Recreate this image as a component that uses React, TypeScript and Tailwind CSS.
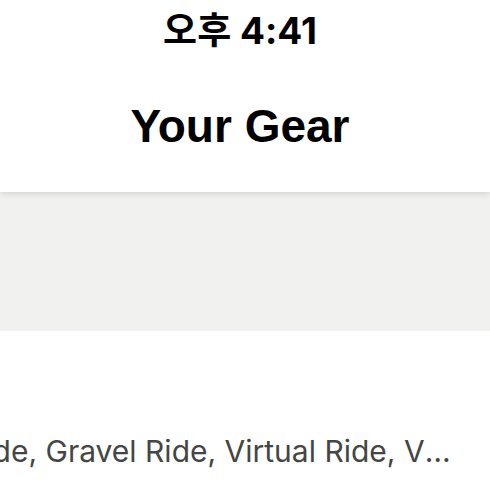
export default function App() {
  return (
    <div className="w-[490px] h-[490px] overflow-hidden bg-white font-['Inter',sans-serif]">
      <header className="relative z-10 bg-white shadow-[0_2px_6px_rgba(0,0,0,0.12)] pr-[10px]">
        <div className="h-[62px] flex items-center justify-center">
          <span className="text-[37px] font-bold text-black font-['Inter','Noto_Sans_CJK_KR',sans-serif]">오후 4:41</span>
        </div>
        <div className="h-[130px] flex items-center justify-center pb-[2px]">
          <h1 className="text-[46px] font-bold text-black font-['Liberation_Sans',sans-serif]">Your Gear</h1>
        </div>
      </header>
      <section className="h-[139px] bg-[#f1f1ef]"></section>
      <div className="pt-[100px]">
        <div className="ml-[-34px] w-[488px] truncate text-[30px] text-[#454545] leading-[40px]">
          Ride, Gravel Ride, Virtual Ride, Virtual Run
        </div>
      </div>
    </div>
  );
}
